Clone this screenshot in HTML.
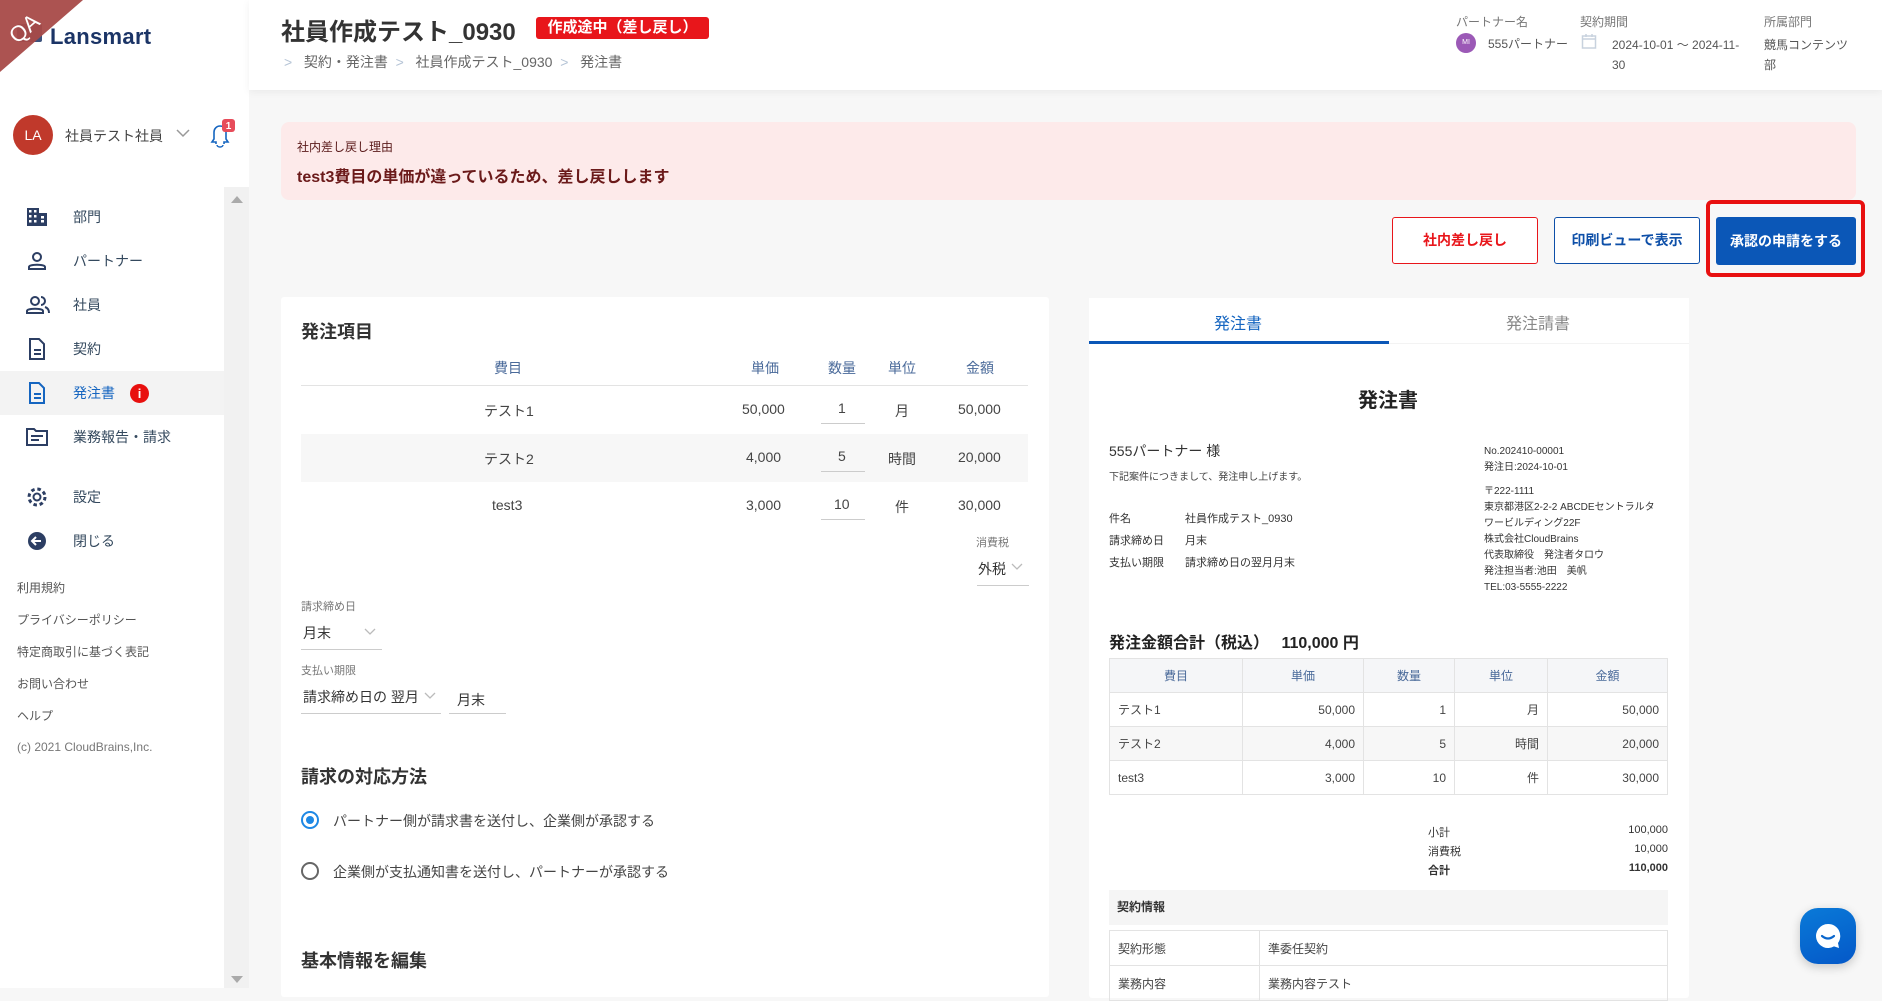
<!DOCTYPE html>
<html><head><meta charset="utf-8">
<style>
*{margin:0;padding:0;box-sizing:border-box}
body{width:1882px;height:988px;overflow:hidden;background:#f7f7f7;font-family:"Liberation Sans","Noto Sans CJK JP",sans-serif;color:#333;position:relative}
.a{position:absolute;white-space:nowrap}
.side{position:absolute;left:0;top:0;width:249px;height:988px;background:#fff}
.nav{position:absolute;left:0;width:224px;height:44px;display:flex;align-items:center;font-size:14px;color:#34495e}
.nav svg{position:absolute;left:26px}
.nav span{position:absolute;left:73px}
.foot{position:absolute;left:17px;font-size:12px;color:#555}
.th{color:#4a6a9a;font-size:14px}
.cell{position:absolute;border:1px solid #e3e3e3;font-size:12px;color:#444;display:flex;align-items:center;padding:0 8px}
</style></head><body>

<!-- sidebar -->
<div class="side"></div>
<div class="a" style="left:224px;top:187px;width:25px;height:801px;background:#f1f1f1"></div>
<div class="a" style="left:231px;top:196px;width:0;height:0;border-left:6px solid transparent;border-right:6px solid transparent;border-bottom:7px solid #aaa"></div>
<div class="a" style="left:231px;top:976px;width:0;height:0;border-left:6px solid transparent;border-right:6px solid transparent;border-top:7px solid #aaa"></div>
<div class="a" style="left:17px;top:24px;width:25px;height:18px;background:#1b3466;border-radius:2px;opacity:.85"></div>
<svg class="a" style="left:0;top:0" width="90" height="90"><polygon points="0,0 83,0 0,72" fill="#a84a48" opacity=".95"/><text x="8" y="36" transform="rotate(-41 24 28)" fill="#fff" font-size="22" font-family="Liberation Sans">QA</text></svg>
<div class="a" style="left:50px;top:24px;font-size:22px;font-weight:bold;color:#1b3466;letter-spacing:.3px">Lansmart</div>
<div class="a" style="left:13px;top:115px;width:40px;height:40px;border-radius:50%;background:#c0392b;color:#fff;font-size:14px;line-height:40px;text-align:center">LA</div>
<div class="a" style="left:65px;top:126px;font-size:14px;color:#444">社員テスト社員</div>
<svg class="a" style="left:175px;top:128px" width="16" height="10"><path d="M2 2 L8 8 L14 2" fill="none" stroke="#999" stroke-width="1.5"/></svg>
<svg class="a" style="left:205px;top:118px" width="30" height="32"><path d="M11 26 V24 H7 L9 21 V14 a6 6 0 0 1 12 0 V21 L23 24 H19 V26" fill="none" stroke="#1565c0" stroke-width="1.6"/><path d="M12 27 a3 2 0 0 0 6 0" fill="none" stroke="#1565c0" stroke-width="1.4"/><rect x="17" y="1" width="13" height="13" rx="3" fill="#e74c5a"/><text x="23.5" y="11" font-size="10" fill="#fff" text-anchor="middle" font-weight="bold">1</text></svg>

<div class="nav" style="top:195px"><svg width="22" height="20"><path d="M1 1h12v18H1zM13 6h8v13h-8" fill="#2c3e63"/><g fill="#fff"><rect x="3" y="3" width="2.5" height="2.5"/><rect x="8" y="3" width="2.5" height="2.5"/><rect x="3" y="8" width="2.5" height="2.5"/><rect x="8" y="8" width="2.5" height="2.5"/><rect x="3" y="13" width="2.5" height="2.5"/><rect x="8" y="13" width="2.5" height="2.5"/><rect x="15" y="9" width="3" height="2.5"/><rect x="15" y="13" width="3" height="2.5"/></g></svg><span>部門</span></div>
<div class="nav" style="top:239px"><svg width="22" height="20"><circle cx="11" cy="6" r="4" fill="none" stroke="#2c3e63" stroke-width="2"/><path d="M3 18 v-2 c0-3 16-3 16 0 v2z" fill="none" stroke="#2c3e63" stroke-width="2"/></svg><span>パートナー</span></div>
<div class="nav" style="top:283px"><svg width="24" height="20"><circle cx="9" cy="6" r="4" fill="none" stroke="#2c3e63" stroke-width="2"/><path d="M1 18 v-2 c0-3 16-3 16 0 v2z" fill="none" stroke="#2c3e63" stroke-width="2"/><path d="M15 2 a4 4 0 0 1 0 8 M19 12 c3 1 4 3 4 6" fill="none" stroke="#2c3e63" stroke-width="2"/></svg><span>社員</span></div>
<div class="nav" style="top:327px"><svg width="22" height="22"><path d="M4 1h9l5 5v15H4z" fill="none" stroke="#2c3e63" stroke-width="2"/><path d="M8 12h7M8 16h7" stroke="#2c3e63" stroke-width="2"/></svg><span>契約</span></div>
<div class="nav" style="top:371px;background:#f3f3f3;color:#1565c0"><svg width="22" height="22"><path d="M4 1h9l5 5v15H4z" fill="none" stroke="#1565c0" stroke-width="2"/><path d="M8 12h7M8 16h7" stroke="#1565c0" stroke-width="2"/></svg><span>発注書</span><div class="a" style="left:130px;top:13px;width:19px;height:19px;border-radius:50%;background:#e8100e;color:#fff;font-size:13px;font-weight:bold;text-align:center;line-height:19px">i</div></div>
<div class="nav" style="top:415px"><svg width="22" height="20"><path d="M1 2h7l2 2h11v14H1z" fill="none" stroke="#2c3e63" stroke-width="2"/><path d="M5 9h12M5 13h8" stroke="#2c3e63" stroke-width="2"/></svg><span>業務報告・請求</span></div>
<div class="nav" style="top:475px"><svg width="22" height="22"><circle cx="11" cy="11" r="3.5" fill="none" stroke="#2c3e63" stroke-width="2"/><circle cx="11" cy="11" r="8" fill="none" stroke="#2c3e63" stroke-width="3" stroke-dasharray="3.5 2.8"/></svg><span>設定</span></div>
<div class="nav" style="top:519px"><svg width="22" height="22"><circle cx="11" cy="11" r="9" fill="#2c3e63"/><path d="M15 11H7M10 7l-4 4 4 4" fill="none" stroke="#fff" stroke-width="2"/></svg><span>閉じる</span></div>

<div class="foot" style="top:579px">利用規約</div>
<div class="foot" style="top:611px">プライバシーポリシー</div>
<div class="foot" style="top:643px">特定商取引に基づく表記</div>
<div class="foot" style="top:675px">お問い合わせ</div>
<div class="foot" style="top:707px">ヘルプ</div>
<div class="foot" style="top:740px;color:#777">(c) 2021 CloudBrains,Inc.</div>

<!-- header -->
<div class="a" style="left:249px;top:0;width:1633px;height:90px;background:#fff;box-shadow:0 2px 8px rgba(0,0,0,.06)"></div>
<div class="a" style="left:281px;top:12px;font-size:24px;font-weight:bold;color:#333">社員作成テスト_0930</div>
<div class="a" style="left:536px;top:17px;width:173px;height:22px;background:#e8161b;border-radius:3px;color:#fff;font-size:15px;font-weight:bold;text-align:center;line-height:22px">作成途中（差し戻し）</div>
<div class="a" style="left:284px;top:52px;font-size:14px;color:#666"><span style="color:#b5c4d6">&gt;</span>&nbsp;&nbsp; 契約・発注書 &nbsp;<span style="color:#b5c4d6">&gt;</span>&nbsp;&nbsp; 社員作成テスト_0930 &nbsp;<span style="color:#b5c4d6">&gt;</span>&nbsp;&nbsp; 発注書</div>
<div class="a" style="left:1456px;top:13px;font-size:12px;color:#777">パートナー名</div>
<div class="a" style="left:1580px;top:13px;font-size:12px;color:#777">契約期間</div>
<div class="a" style="left:1764px;top:13px;font-size:12px;color:#777">所属部門</div>
<div class="a" style="left:1456px;top:33px;width:20px;height:20px;border-radius:50%;background:#9b59b6;color:#fff;font-size:7px;text-align:center;line-height:20px">MI</div>
<div class="a" style="left:1488px;top:35px;font-size:12px;color:#555">555パートナー</div>
<svg class="a" style="left:1581px;top:33px" width="16" height="16"><rect x="1.5" y="3" width="13" height="12" fill="none" stroke="#c8d2de" stroke-width="1.5"/><path d="M1.5 6h13M5 1v3M11 1v3" stroke="#c8d2de" stroke-width="1.5"/></svg>
<div class="a" style="left:1612px;top:35px;font-size:12px;color:#555;line-height:20px">2024-10-01 ～ 2024-11-<br>30</div>
<div class="a" style="left:1764px;top:35px;font-size:12px;color:#555;line-height:20px">競馬コンテンツ<br>部</div>

<!-- alert -->
<div class="a" style="left:281px;top:122px;width:1575px;height:78px;background:#fdeaea;border-radius:8px"></div>
<div class="a" style="left:297px;top:138px;font-size:12px;color:#5a1a1a">社内差し戻し理由</div>
<div class="a" style="left:297px;top:163px;font-size:16px;color:#6b1a1a;font-weight:bold">test3費目の単価が違っているため、差し戻しします</div>

<!-- buttons -->
<div class="a" style="left:1392px;top:217px;width:146px;height:47px;border:1px solid #e8161b;border-radius:3px;background:#fff;color:#e8161b;font-size:14px;font-weight:bold;text-align:center;line-height:45px">社内差し戻し</div>
<div class="a" style="left:1554px;top:217px;width:146px;height:47px;border:1px solid #0d4fa8;border-radius:3px;background:#fff;color:#0d4fa8;font-size:14px;font-weight:bold;text-align:center;line-height:45px">印刷ビューで表示</div>
<div class="a" style="left:1706px;top:200px;width:159px;height:77px;border:4px solid #e81010;border-radius:6px"></div>
<div class="a" style="left:1716px;top:217px;width:140px;height:48px;background:#0b57b7;border-radius:3px;color:#fff;font-size:14px;font-weight:bold;text-align:center;line-height:48px">承認の申請をする</div>

<!-- left card -->
<div class="a" style="left:281px;top:297px;width:768px;height:700px;background:#fff;border-radius:3px"></div>
<div class="a" style="left:301px;top:318px;font-size:18px;font-weight:bold;color:#333">発注項目</div>
<div class="a th" style="left:494px;top:358px">費目</div>
<div class="a th" style="left:751px;top:358px">単価</div>
<div class="a th" style="left:828px;top:358px">数量</div>
<div class="a th" style="left:888px;top:358px">単位</div>
<div class="a th" style="left:966px;top:358px">金額</div>
<div class="a" style="left:301px;top:385px;width:727px;height:1px;background:#e3e3e3"></div>
<div class="a" style="left:301px;top:434px;width:727px;height:48px;background:#f7f7f7"></div>
<div style="font-size:14px;color:#444">
<div class="a" style="left:484px;top:401px">テスト1</div><div class="a" style="left:742px;top:401px">50,000</div><div class="a" style="left:838px;top:400px">1</div><div class="a" style="left:895px;top:401px">月</div><div class="a" style="left:958px;top:401px">50,000</div>
<div class="a" style="left:484px;top:449px">テスト2</div><div class="a" style="left:746px;top:449px">4,000</div><div class="a" style="left:838px;top:448px">5</div><div class="a" style="left:888px;top:449px">時間</div><div class="a" style="left:958px;top:449px">20,000</div>
<div class="a" style="left:492px;top:497px">test3</div><div class="a" style="left:746px;top:497px">3,000</div><div class="a" style="left:834px;top:496px">10</div><div class="a" style="left:895px;top:497px">件</div><div class="a" style="left:958px;top:497px">30,000</div>
</div>
<div class="a" style="left:821px;top:423px;width:44px;height:1px;background:#ccc"></div>
<div class="a" style="left:821px;top:471px;width:44px;height:1px;background:#ccc"></div>
<div class="a" style="left:821px;top:519px;width:44px;height:1px;background:#ccc"></div>
<div class="a" style="left:976px;top:534px;font-size:11px;color:#777">消費税</div>
<div class="a" style="left:978px;top:559px;font-size:14px;color:#333">外税</div>
<svg class="a" style="left:1011px;top:563px" width="12" height="8"><path d="M1 1l5 5 5-5" fill="none" stroke="#bbb" stroke-width="1.3"/></svg>
<div class="a" style="left:977px;top:585px;width:52px;height:1px;background:#ccc"></div>
<div class="a" style="left:301px;top:598px;font-size:11px;color:#777">請求締め日</div>
<div class="a" style="left:303px;top:623px;font-size:14px;color:#333">月末</div>
<svg class="a" style="left:364px;top:628px" width="12" height="8"><path d="M1 1l5 5 5-5" fill="none" stroke="#bbb" stroke-width="1.3"/></svg>
<div class="a" style="left:301px;top:649px;width:81px;height:1px;background:#ccc"></div>
<div class="a" style="left:301px;top:662px;font-size:11px;color:#777">支払い期限</div>
<div class="a" style="left:303px;top:687px;font-size:14px;color:#333">請求締め日の 翌月</div>
<svg class="a" style="left:424px;top:692px" width="12" height="8"><path d="M1 1l5 5 5-5" fill="none" stroke="#bbb" stroke-width="1.3"/></svg>
<div class="a" style="left:301px;top:713px;width:140px;height:1px;background:#ccc"></div>
<div class="a" style="left:457px;top:690px;font-size:14px;color:#333">月末</div>
<div class="a" style="left:449px;top:713px;width:57px;height:1px;background:#ccc"></div>
<div class="a" style="left:301px;top:763px;font-size:18px;font-weight:bold;color:#333">請求の対応方法</div>
<div class="a" style="left:301px;top:811px;width:18px;height:18px;border:2px solid #1e88e5;border-radius:50%"></div>
<div class="a" style="left:306px;top:816px;width:8px;height:8px;background:#1e88e5;border-radius:50%"></div>
<div class="a" style="left:333px;top:811px;font-size:14px;color:#444">パートナー側が請求書を送付し、企業側が承認する</div>
<div class="a" style="left:301px;top:862px;width:18px;height:18px;border:2px solid #666;border-radius:50%"></div>
<div class="a" style="left:333px;top:862px;font-size:14px;color:#444">企業側が支払通知書を送付し、パートナーが承認する</div>
<div class="a" style="left:301px;top:947px;font-size:18px;font-weight:bold;color:#333">基本情報を編集</div>

<!-- right card -->
<div class="a" style="left:1089px;top:298px;width:600px;height:700px;background:#fff;border-radius:3px"></div>
<div class="a" style="left:1089px;top:298px;width:600px;height:46px;background:#fff;border-bottom:1px solid #f3f3f3"></div>
<div class="a" style="left:1214px;top:310px;font-size:16px;color:#1565c0">発注書</div>
<div class="a" style="left:1506px;top:310px;font-size:16px;color:#888">発注請書</div>
<div class="a" style="left:1089px;top:341px;width:300px;height:3px;background:#0b57b7"></div>
<div class="a" style="left:1358px;top:384px;font-size:20px;font-weight:bold;color:#222">発注書</div>
<div class="a" style="left:1109px;top:441px;font-size:14px;color:#333">555パートナー 様</div>
<div class="a" style="left:1109px;top:468px;font-size:10px;color:#444">下記案件につきまして、発注申し上げます。</div>
<div style="font-size:11px;color:#333">
<div class="a" style="left:1109px;top:510px">件名</div><div class="a" style="left:1185px;top:510px">社員作成テスト_0930</div>
<div class="a" style="left:1109px;top:532px">請求締め日</div><div class="a" style="left:1185px;top:532px">月末</div>
<div class="a" style="left:1109px;top:554px">支払い期限</div><div class="a" style="left:1185px;top:554px">請求締め日の翌月月末</div>
</div>
<div class="a" style="left:1484px;top:444px;font-size:10px;color:#333;line-height:16px;white-space:normal;width:185px">No.202410-00001<br>発注日:2024-10-01<div style="height:8px"></div>〒222-1111<br>東京都港区2-2-2 ABCDEセントラルタ<br>ワービルディング22F<br>株式会社CloudBrains<br>代表取締役　発注者タロウ<br>発注担当者:池田　美帆<br>TEL:03-5555-2222</div>
<div class="a" style="left:1109px;top:629px;font-size:16px;font-weight:bold;color:#222">発注金額合計（税込）　 110,000 円</div>

<!-- doc table -->
<div style="color:#4a6a9a;font-size:12px">
<div class="cell" style="left:1109px;top:658px;width:134px;height:35px;background:#f5f6f8;justify-content:center;color:#4a6a9a">費目</div>
<div class="cell" style="left:1242px;top:658px;width:122px;height:35px;background:#f5f6f8;justify-content:center;color:#4a6a9a">単価</div>
<div class="cell" style="left:1363px;top:658px;width:92px;height:35px;background:#f5f6f8;justify-content:center;color:#4a6a9a">数量</div>
<div class="cell" style="left:1454px;top:658px;width:94px;height:35px;background:#f5f6f8;justify-content:center;color:#4a6a9a">単位</div>
<div class="cell" style="left:1547px;top:658px;width:121px;height:35px;background:#f5f6f8;justify-content:center;color:#4a6a9a">金額</div>
</div>
<div class="cell" style="left:1109px;top:692px;width:134px;height:35px">テスト1</div>
<div class="cell" style="left:1242px;top:692px;width:122px;height:35px;justify-content:flex-end">50,000</div>
<div class="cell" style="left:1363px;top:692px;width:92px;height:35px;justify-content:flex-end">1</div>
<div class="cell" style="left:1454px;top:692px;width:94px;height:35px;justify-content:flex-end">月</div>
<div class="cell" style="left:1547px;top:692px;width:121px;height:35px;justify-content:flex-end">50,000</div>
<div class="cell" style="left:1109px;top:726px;width:134px;height:35px;background:#f7f7f7">テスト2</div>
<div class="cell" style="left:1242px;top:726px;width:122px;height:35px;justify-content:flex-end;background:#f7f7f7">4,000</div>
<div class="cell" style="left:1363px;top:726px;width:92px;height:35px;justify-content:flex-end;background:#f7f7f7">5</div>
<div class="cell" style="left:1454px;top:726px;width:94px;height:35px;justify-content:flex-end;background:#f7f7f7">時間</div>
<div class="cell" style="left:1547px;top:726px;width:121px;height:35px;justify-content:flex-end;background:#f7f7f7">20,000</div>
<div class="cell" style="left:1109px;top:760px;width:134px;height:35px">test3</div>
<div class="cell" style="left:1242px;top:760px;width:122px;height:35px;justify-content:flex-end">3,000</div>
<div class="cell" style="left:1363px;top:760px;width:92px;height:35px;justify-content:flex-end">10</div>
<div class="cell" style="left:1454px;top:760px;width:94px;height:35px;justify-content:flex-end">件</div>
<div class="cell" style="left:1547px;top:760px;width:121px;height:35px;justify-content:flex-end">30,000</div>

<div style="font-size:11px;color:#333">
<div class="a" style="left:1428px;top:824px">小計</div><div class="a" style="left:1560px;top:824px;width:108px;text-align:right">100,000</div>
<div class="a" style="left:1428px;top:843px">消費税</div><div class="a" style="left:1560px;top:843px;width:108px;text-align:right">10,000</div>
<div class="a" style="left:1428px;top:862px;font-weight:bold">合計</div><div class="a" style="left:1560px;top:862px;width:108px;text-align:right;font-weight:bold">110,000</div>
</div>
<div class="a" style="left:1109px;top:890px;width:559px;height:35px;background:#f5f5f5;font-size:12px;font-weight:bold;padding-left:8px;line-height:35px">契約情報</div>
<div class="cell" style="left:1109px;top:930px;width:151px;height:36px">契約形態</div>
<div class="cell" style="left:1259px;top:930px;width:409px;height:36px">準委任契約</div>
<div class="cell" style="left:1109px;top:965px;width:151px;height:36px">業務内容</div>
<div class="cell" style="left:1259px;top:965px;width:409px;height:36px">業務内容テスト</div>

<!-- chat -->
<div class="a" style="left:1800px;top:908px;width:56px;height:56px;border-radius:18px;background:linear-gradient(160deg,#0a7ad8,#0458c8);box-shadow:0 3px 10px rgba(0,0,0,.2)"></div>
<svg class="a" style="left:1812px;top:920px" width="32" height="32"><path d="M16 4a12 12 0 1 0 6 22.4l5 1.6-1-5A12 12 0 0 0 16 4z" fill="#fff"/><path d="M10 16q6 5 12 0" fill="none" stroke="#0a66cc" stroke-width="2.2" stroke-linecap="round"/></svg>
</body></html>
